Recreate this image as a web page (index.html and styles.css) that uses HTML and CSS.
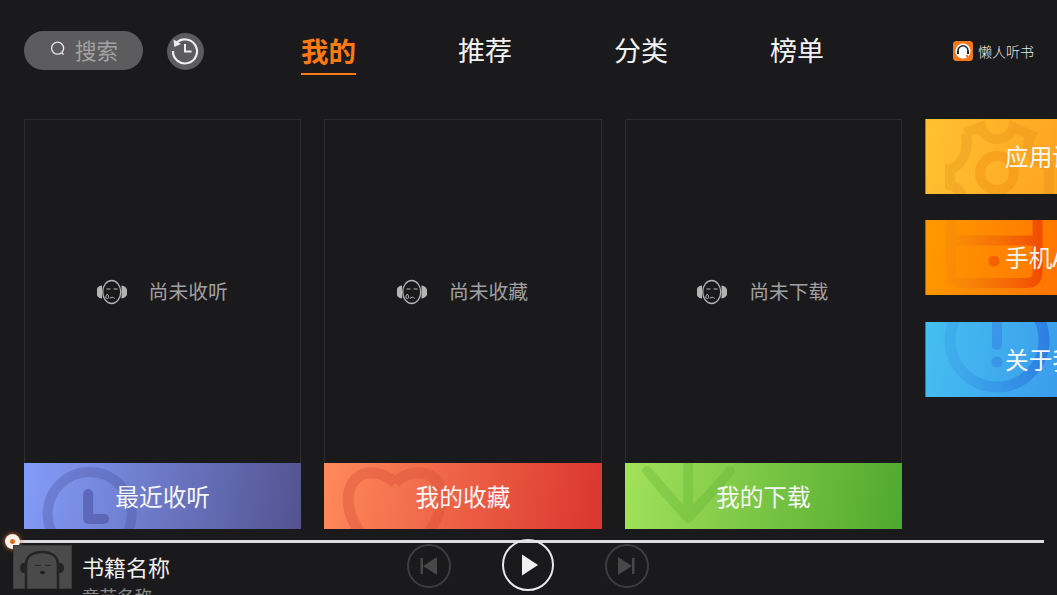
FILE: index.html
```html
<!DOCTYPE html>
<html lang="zh">
<head>
<meta charset="utf-8">
<title>懒人听书</title>
<link rel="stylesheet" href="styles.css">
</head>
<body>
<div class="app">
  <header class="top">
    <div class="search">
      <svg class="search-icon" viewBox="0 0 16 16"><circle cx="7.6" cy="7.2" r="6" fill="none" stroke="#e4e4e4" stroke-width="1.3"/><path d="M11.8 11.600l1.800 2" stroke="#e4e4e4" stroke-width="1.3" fill="none"/></svg>
      <span>搜索</span>
    </div>
    <div class="history">
      <svg viewBox="0 0 37 37"><path d="M10 11.500a12 12 0 1 1-3 7.500" fill="none" stroke="#eee" stroke-width="2.200"/><path d="M7.500 7.500l.8 7.500 6.700-3z" fill="#eee"/><path d="M19 12v7.500h6.500" fill="none" stroke="#eee" stroke-width="2"/></svg>
    </div>
    <nav class="tabs">
      <a class="tab tab-on">我的</a>
      <a class="tab">推荐</a>
      <a class="tab">分类</a>
      <a class="tab">榜单</a>
    </nav>
    <div class="brand">
      <svg class="brand-logo" viewBox="0 0 20 20"><rect width="20" height="20" rx="3.500" fill="#f47a1f"/><circle cx="10" cy="10" r="7.600" fill="#fff"/><path d="M5 13V9.800a5 5 0 0 1 10 0V13" fill="none" stroke="#222" stroke-width="1.500"/><rect x="4" y="9.600" width="2" height="3.600" rx="1" fill="#222"/><rect x="14" y="9.600" width="2" height="3.600" rx="1" fill="#222"/><circle cx="14" cy="15" r="1.100" fill="#ee4a2a"/></svg>
      <span>懒人听书</span>
    </div>
  </header>

  <main class="shelf">
    <section class="col">
      <div class="empty">
        <svg class="face" viewBox="0 0 30 28"><use href="#face-art"/></svg>
        <span>尚未收听</span>
      </div>
      <div class="banner banner-recent">
        <svg class="mark" viewBox="0 0 277 66"><circle cx="65.500" cy="51" r="42" fill="none" stroke="#4e56a4" stroke-opacity=".38" stroke-width="10"/><path d="M64 31v25h16" fill="none" stroke="#4e56a4" stroke-opacity=".65" stroke-width="10" stroke-linecap="round" stroke-linejoin="round"/></svg>
        <span>最近收听</span>
      </div>
    </section>
    <section class="col">
      <div class="empty">
        <svg class="face" viewBox="0 0 30 28"><use href="#face-art"/></svg>
        <span>尚未收藏</span>
      </div>
      <div class="banner banner-fav">
        <svg class="mark" viewBox="0 0 277 66"><path d="M71 20C62 11 52 9 43 10 31 12 24 24 24 36c0 14 6 26 14 36M71 20c7-8 18-11 27-10 14 2 21 14 20 26-2 14-9 28-15 36" fill="none" stroke="#d8503a" stroke-opacity=".42" stroke-width="11"/></svg>
        <span>我的收藏</span>
      </div>
    </section>
    <section class="col">
      <div class="empty">
        <svg class="face" viewBox="0 0 30 28"><use href="#face-art"/></svg>
        <span>尚未下载</span>
      </div>
      <div class="banner banner-down">
        <svg class="mark" viewBox="0 0 277 66"><path d="M22 8l41 47 42-47M63 -8v63" fill="none" stroke="#5fb233" stroke-opacity=".32" stroke-width="10" stroke-linecap="round" stroke-linejoin="round"/></svg>
        <span>我的下载</span>
      </div>
    </section>
    <aside class="side">
      <a class="tile tile-set">
        <svg class="mark" viewBox="0 0 256 75"><path d="M40 14L56 8C60 24 84 24 88 8L106 16C98 30 108 44 124 46V80M40 14C46 30 36 48 25 50V66C32 68 38 74 38 80" fill="none" stroke="#e09018" stroke-opacity=".32" stroke-width="10"/><circle cx="72" cy="54" r="17" fill="none" stroke="#ee8c10" stroke-opacity=".4" stroke-width="10"/></svg>
        <span>应用设置</span>
      </a>
      <a class="tile tile-phone">
        <svg class="mark" viewBox="0 0 256 75"><defs><linearGradient id="phone-stroke" gradientUnits="userSpaceOnUse" x1="20" y1="0" x2="118" y2="0"><stop offset="0" stop-color="#f28a10" stop-opacity=".35"/><stop offset="1" stop-color="#f04800" stop-opacity=".95"/></linearGradient></defs><path d="M25.500 -6V54a9 9 0 0 0 9 9H103a9.500 9.500 0 0 0 9.500-9.500V-6M25.500 20.500H112.500" fill="none" stroke="url(#phone-stroke)" stroke-width="10"/><circle cx="69" cy="41" r="5.500" fill="#f04800" fill-opacity=".6"/></svg>
        <span>手机APP</span>
      </a>
      <a class="tile tile-about">
        <svg class="mark" viewBox="0 0 256 75"><defs><linearGradient id="about-stroke" gradientUnits="userSpaceOnUse" x1="20" y1="0" x2="124" y2="0"><stop offset="0" stop-color="#3aa0e8" stop-opacity=".4"/><stop offset="1" stop-color="#2a78e0" stop-opacity=".85"/></linearGradient></defs><circle cx="72" cy="18" r="47" fill="none" stroke="url(#about-stroke)" stroke-width="11"/><path d="M72 -4V23" stroke="#3a8ee4" stroke-opacity=".75" stroke-width="10" stroke-linecap="round"/><circle cx="72" cy="40" r="5.500" fill="#3a8ee4" fill-opacity=".8"/></svg>
        <span>关于我们</span>
      </a>
    </aside>
  </main>

  <footer class="player">
    <div class="progress"><i class="thumb"></i></div>
    <div class="player-row">
      <div class="now">
        <svg class="cover" viewBox="0 0 59 44"><rect width="59" height="44" fill="#3c3c3c"/><rect x="1" y="1" width="57" height="42" fill="#4a4a4a"/><path d="M13 44V20C13 11 20 7 29 7s16 4 16 13v24" fill="none" stroke="#242424" stroke-width="2.600"/><ellipse cx="10.500" cy="23" rx="3.500" ry="5" fill="#242424"/><ellipse cx="47.500" cy="23" rx="3.500" ry="5" fill="#242424"/><path d="M22 20c2 .8 4 .8 6 0M32 20c2 .8 4 .8 6 0" stroke="#242424" stroke-width="1" fill="none"/><ellipse cx="29.500" cy="27.500" rx="2.600" ry="1.800" fill="#222"/></svg>
        <div class="now-text">
          <div class="book">书籍名称</div>
          <div class="chapter">章节名称</div>
        </div>
      </div>
      <div class="controls">
        <button class="ctl"><svg viewBox="0 0 40 40"><path d="M28 11L14 20l14 9z" fill="#484848"/><rect x="11.500" y="12" width="2.500" height="16" fill="#484848"/></svg></button>
        <button class="ctl ctl-play"><svg viewBox="0 0 48 48"><path d="M18 13.500L34 24 18 34.500z" fill="#f0f0f0"/></svg></button>
        <button class="ctl"><svg viewBox="0 0 40 40"><path d="M11 11l14 9-14 9z" fill="#484848"/><rect x="25" y="12" width="2.500" height="16" fill="#484848"/></svg></button>
      </div>
    </div>
  </footer>
</div>
<svg class="defs" aria-hidden="true"><defs><g id="face-art"><path d="M5 7.500a6 6.500 0 0 0 0 13z" fill="#b4b4b4"/><path d="M24.500 7.500a6 6.500 0 0 1 0 13z" fill="#b4b4b4"/><ellipse cx="14.700" cy="14" rx="9" ry="11.500" fill="none" stroke="#b4b4b4" stroke-width="1.300"/><path d="M9.500 11h4M16.500 11h4M12.800 20.500c1.500-1.600 3.600-1.600 5 0M9.800 16.500c-1.400 2-1.200 4 .5 4s1.900-2 .4-4z" fill="none" stroke="#b4b4b4" stroke-width="1"/></g></defs></svg>
</body>
</html>
```
FILE: styles.css
```css
* { box-sizing: border-box; }
html, body { margin: 0; height: 100%; overflow: hidden; background: #1a1a1c; }
body { font-family: "Noto Sans CJK SC", "Noto Sans", sans-serif; color: #fff; }
.defs { width: 0; height: 0; display: block; }
.app { width: 1057px; height: 595px; overflow: hidden; display: flex; flex-direction: column; }

.top { height: 119px; padding: 31px 23px 0 24px; display: flex; align-items: flex-start; flex: none; }
.search { width: 119px; height: 39px; border-radius: 20px; background: #5c5c5e; display: flex; align-items: center; padding-left: 26px; gap: 9px; font-size: 21.500px; line-height: 37px; padding-bottom: 3px; color: #a2a2a2; flex: none; }
.search-icon { width: 16px; height: 16px; }
.history { width: 37px; height: 37px; margin: 2px 0 0 24px; border-radius: 50%; background: #5c5c5e; flex: none; }
.history svg { display: block; width: 37px; height: 37px; margin-left: -1px; margin-top: -1px; }
.tabs { display: flex; gap: 102px; margin-left: 98px; flex: none; }
.tab { width: 54px; height: 44px; font-size: 27px; line-height: 38px; font-weight: 400; text-align: center; white-space: nowrap; color: #f2f2f2; }
.tab-on { color: #ff7a12; font-size: 27.500px; font-weight: 700; width: 55px; margin-left: -1px; border-bottom: 2.500px solid #ff7a12; }
.brand { margin-left: auto; margin-top: 10px; display: flex; align-items: center; gap: 5px; font-size: 14px; font-weight: 300; color: #e8e8e8; height: 20px; }
.brand-logo { width: 20px; height: 20px; }

.shelf { display: flex; gap: 23px; padding-left: 24px; height: 410px; flex: none; }
.col { width: 277.330px; height: 410px; display: flex; flex-direction: column; flex: none; }
.empty { flex: 1; border: 1px solid #2c2c2e; border-bottom: 0; display: flex; align-items: center; justify-content: center; gap: 22px; font-size: 19.800px; line-height: 26px; color: #a0a0a0; padding: 0 1px 1px 0; }
.face { width: 30px; height: 28px; margin-top: 2px; }
.banner { height: 66px; position: relative; overflow: hidden; display: flex; align-items: center; justify-content: center; font-size: 23.700px; line-height: 30px; padding-bottom: 1px; color: #f6f6f6; }
.banner span, .tile span { position: relative; }
.mark { position: absolute; left: 0; top: 0; width: 100%; height: 100%; }
.banner-recent { background: linear-gradient(100deg, #839dfa, #53528f); }
.banner-fav { background: linear-gradient(100deg, #ff8a5c, #da352e); }
.banner-down { background: linear-gradient(100deg, #a3e25b, #4fa82e); }

.side { width: 256px; display: flex; flex-direction: column; gap: 26.400px; flex: none; }
.tile { width: 256px; height: 75px; position: relative; overflow: hidden; display: flex; align-items: center; padding: 0 0 1px 80px; font-size: 23.700px; line-height: 30px; color: #f6f6f6; white-space: nowrap; box-shadow: inset 1px 0 0 rgba(26,26,28,.4); }
.tile-set { background: linear-gradient(100deg, #ffc231, #ff8a12); }
.tile-phone { background: linear-gradient(100deg, #ff9a00, #ff5500); }
.tile-about { background: linear-gradient(100deg, #45bff0, #3280e8); }

.player { flex: 1; min-height: 0; padding: 11px 0 0 13px; }
.progress { position: relative; width: 1031px; height: 3px; background: #dcdcdc; }
.thumb { position: absolute; left: -8px; top: -6px; width: 15px; height: 15px; border-radius: 50%; background: radial-gradient(circle, #e2711d 0 2px, #fbf3ec 3px); box-shadow: 0 0 5px #e2711d; }
.player-row { display: flex; margin-top: 2px; position: relative; height: 80px; }
.now { display: flex; gap: 11px; align-items: flex-start; flex: none; width: 390px; }
.cover { width: 59px; height: 44px; flex: none; }
.now-text { margin-top: 8px; margin-left: -1px; }
.book { font-size: 22px; line-height: 26px; color: #f0f0f0; }
.chapter { font-size: 17.500px; line-height: 24px; color: #8a8a8a; margin-top: 5px; }
.controls { display: flex; gap: 51px; align-items: center; height: 42px; margin-left: 4px; }
.ctl { width: 44px; height: 44px; padding: 0; border: 2px solid #3e3e3e; border-radius: 50%; background: none; flex: none; display: block; }
.ctl svg { display: block; width: 100%; height: 100%; }
.ctl-play { width: 52px; height: 52px; border-color: #e8e8e8; margin-top: -2px; }
```
